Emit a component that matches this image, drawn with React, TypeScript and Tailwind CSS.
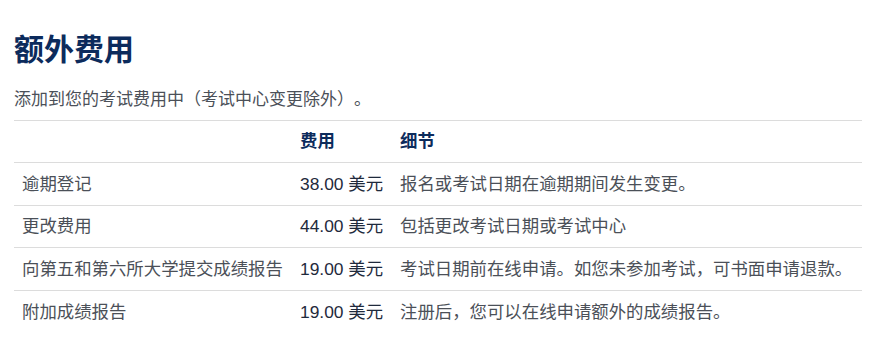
const rows = [
  { item: "逾期登记", fee: "38.00 美元", detail: "报名或考试日期在逾期期间发生变更。" },
  { item: "更改费用", fee: "44.00 美元", detail: "包括更改考试日期或考试中心" },
  { item: "向第五和第六所大学提交成绩报告", fee: "19.00 美元", detail: "考试日期前在线申请。如您未参加考试，可书面申请退款。" },
  { item: "附加成绩报告", fee: "19.00 美元", detail: "注册后，您可以在线申请额外的成绩报告。" },
];

export default function App() {
  return (
    <div
      className="w-[885px] h-[348px] bg-white px-[14px] pt-[30px] overflow-hidden [text-spacing-trim:space-all]"
      style={{ fontFamily: '"Liberation Sans", "Noto Sans CJK SC", sans-serif' }}
    >
      {/* Title */}
      <h1 className="text-[30px] leading-[40px] font-bold text-[#0c2b5c]">额外费用</h1>
      <p
        className="mt-[16px] text-[17px] leading-[24px] text-[#4b5058] [text-spacing-trim:space-all]"
        style={{ fontFamily: '"Noto Sans CJK SC", sans-serif' }}
      >
        添加到您的考试费用中（考试中心变更除外）。
      </p>

      {/* Fee table */}
      <table className="mt-[10px] w-[848px] border-collapse text-[17.4px] text-[#4b5058]">
        <thead>
          <tr className="border-t border-[#dcdcdc] h-[42px]">
            <th className="w-[278px]" />
            <th className="w-[100px] px-2 text-left font-bold text-[#0c2b5c]">费用</th>
            <th className="px-2 text-left font-bold text-[#0c2b5c]">细节</th>
          </tr>
        </thead>
        <tbody>
          {rows.map((r) => (
            <tr key={r.item} className="border-t border-[#dcdcdc] h-[42.6px]">
              <td className="px-2 whitespace-nowrap">{r.item}</td>
              <td className="px-2 whitespace-nowrap text-[#1f2a3c]">{r.fee}</td>
              <td className="px-2 whitespace-nowrap">{r.detail}</td>
            </tr>
          ))}
        </tbody>
      </table>
    </div>
  );
}
